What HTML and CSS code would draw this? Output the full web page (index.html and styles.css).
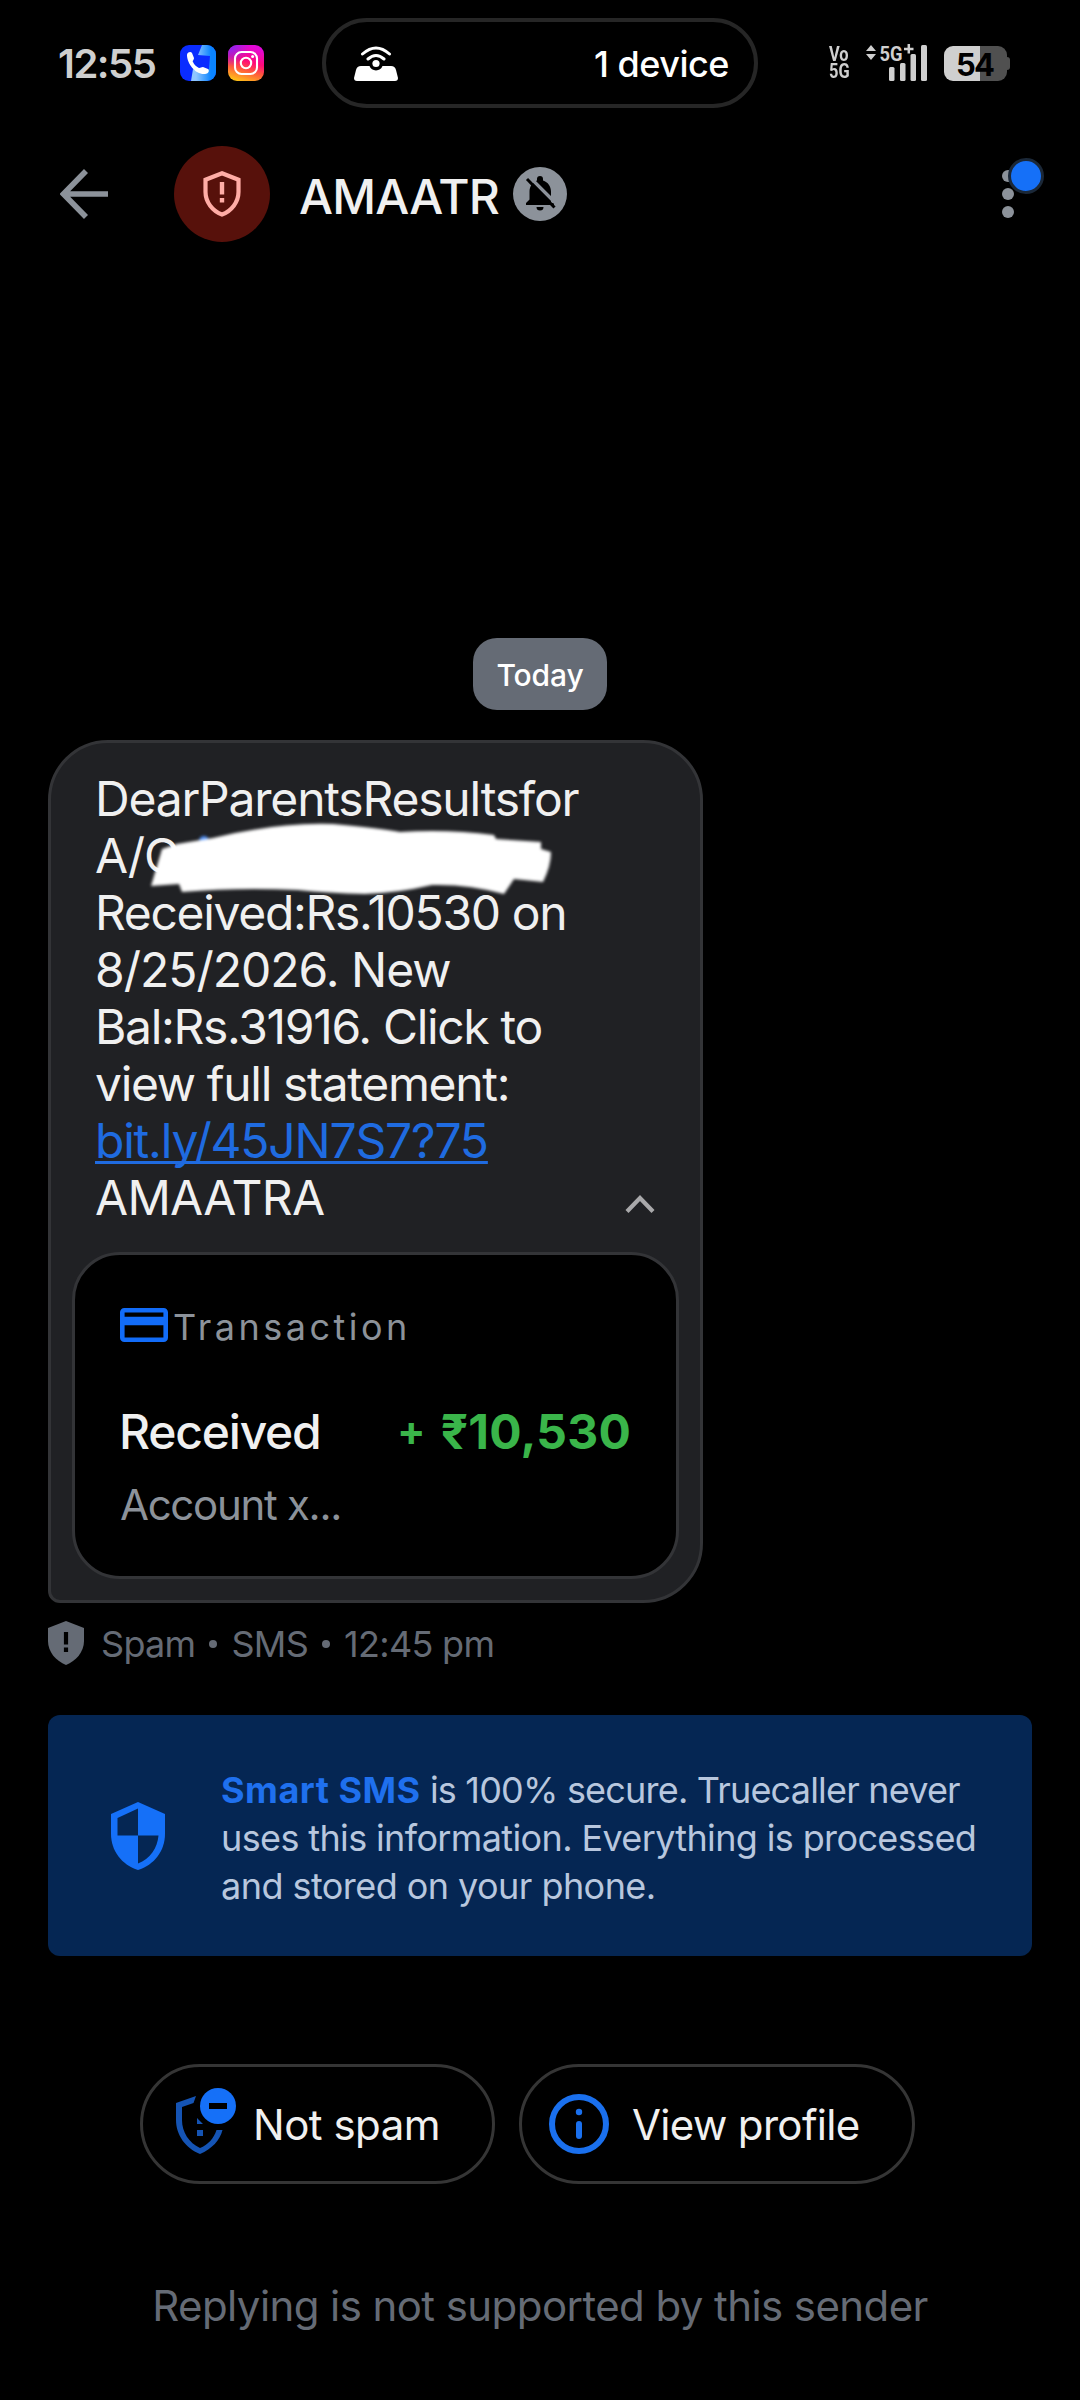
FILE: index.html
```html
<!DOCTYPE html>
<html lang="en">
<head>
<meta charset="utf-8">
<title>AMAATR</title>
<link rel="stylesheet" href="styles.css">
</head>
<body>
<div class="screen">
  <div class="status">
    <div class="status-left">
      <span class="clock">12:55</span>
      <svg class="app" viewBox="0 0 36 36">
        <defs>
          <linearGradient id="sky" x1="0" y1="0" x2="1" y2="0"><stop offset="0.2" stop-color="#8fc6ff"/><stop offset="0.8" stop-color="#0a84ff"/></linearGradient>
          <clipPath id="tile"><rect width="36" height="36" rx="9"/></clipPath>
        </defs>
        <g clip-path="url(#tile)">
          <rect width="36" height="36" fill="#0a2cff"/>
          <path d="M22 0h14v36H11l2-12 9 3 7-3 1-13-12-1z" fill="url(#sky)"/>
          <path d="M7 10c0-3 4-4 5-2l2 5c0 2-2 3-1 4 1 3 4 5 6 6 2 0 2-1 4-1l5 2c2 2 0 5-3 5C16 30 7 19 7 10z" fill="#fff"/>
        </g>
      </svg>
      <svg class="app" viewBox="0 0 36 36">
        <defs>
          <linearGradient id="insta" x1="0.2" y1="1" x2="0.5" y2="0"><stop offset="0" stop-color="#ffc815"/><stop offset="0.35" stop-color="#ff5a3c"/><stop offset="0.6" stop-color="#ff0a78"/><stop offset="1" stop-color="#e208d8"/></linearGradient>
          <radialGradient id="violet" cx="0" cy="0" r="0.6"><stop offset="0" stop-color="#7a2bff"/><stop offset="1" stop-color="#7a2bff" stop-opacity="0"/></radialGradient>
        </defs>
        <rect width="36" height="36" rx="9" fill="url(#insta)"/>
        <rect width="36" height="36" rx="9" fill="url(#violet)"/>
        <g fill="none" stroke="#fff" stroke-width="2.1"><rect x="7" y="7" width="22" height="22" rx="6.5"/><circle cx="18" cy="18" r="5.2"/></g>
        <circle cx="24.6" cy="11.6" r="1.5" fill="#fff"/>
      </svg>
    </div>
    <div class="island">
      <svg class="tether" viewBox="0 0 46 35">
        <path d="M8 20h8.500a7 7 0 0 0 13 0H38q4 0 5 4l2 8q0 3-3 3H4q-3 0-3-3l2-8q1-4 5-4z" fill="#fff"/>
        <circle cx="23" cy="17.500" r="3.600" fill="#fff"/>
        <path d="M9.500 8Q23-4 36.500 8M15 13Q23 6 31 13" fill="none" stroke="#fff" stroke-width="3" stroke-linecap="round"/>
      </svg>
      <span class="devices">1 device</span>
    </div>
    <div class="status-right">
      <div class="volte"><span>Vo</span><span>5G</span></div>
      <svg class="signal" viewBox="0 0 62 38">
        <path d="M5 1l5 6H0zM5 16l5-6H0z" fill="#cfcfcf"/>
        <text class="net" x="13.500" y="16.500" textLength="23" lengthAdjust="spacingAndGlyphs">5G</text>
        <path d="M38 5h9.500M42.800 0v9.500" stroke="#cfcfcf" stroke-width="2.500"/>
        <g fill="#cfcfcf"><rect x="23" y="23" width="5.500" height="14" rx="1.500"/><rect x="34" y="19" width="5.500" height="18" rx="1.500"/><rect x="44.500" y="10" width="5.500" height="27" rx="1.500"/><rect x="55" y="1" width="6" height="36" rx="1.500"/></g>
      </svg>
      <div class="battery"><span>54</span></div>
    </div>
  </div>

  <div class="header">
    <svg class="back" viewBox="0 0 48 50"><path d="M26 2L3.500 25 26 48M3 25h45" fill="none" stroke="#8c929a" stroke-width="5.600"/></svg>
    <div class="avatar">
      <svg width="38" height="46" viewBox="0 0 38 46">
        <path d="M19 2.300L35.500 8.700V21c0 10-7 19-16.500 22.500C9.500 40 2.500 31 2.500 21V8.700z" fill="none" stroke="#ffada6" stroke-width="4.200"/>
        <path d="M19 11v12.500M19 27v4.500" stroke="#ffada6" stroke-width="4.400"/>
      </svg>
    </div>
    <span class="title">AMAATR</span>
    <svg class="muted" viewBox="0 0 54 54">
      <circle cx="27" cy="27" r="27" fill="#8c929a"/>
      <path d="M27 9a3 3 0 0 1 3 3v1.500c5 1.500 8 6 8 11V36H41v2H13v-2l3.500-3.500V24.500c0-5 3-9.500 7.500-11V12a3 3 0 0 1 3-3z" fill="#000"/>
      <path d="M23.500 40h7a3.500 3.500 0 0 1-7 0z" fill="#000"/>
      <path d="M17 10.500L46 39.500" stroke="#8c929a" stroke-width="3.400"/>
      <path d="M14 12L41.500 40.500" stroke="#000" stroke-width="3"/>
    </svg>
    <div class="more">
      <i></i><i></i><i></i>
      <b class="badge"></b>
    </div>
  </div>

  <div class="day">Today</div>

  <div class="bubble">
    <div class="message">
      <span class="line">DearParentsResultsfor</span>
      <span class="line">A/C</span>
      <span class="line tight">Received:Rs.10530 on</span>
      <span class="line wide">8/25/2026. New</span>
      <span class="line tight">Bal:Rs.31916. Click to</span>
      <span class="line tight">view full statement:</span>
      <span class="line"><a class="link">bit.ly/45JN7S7?75</a></span>
      <span class="line caps">AMAATRA</span>
      <svg class="chevron" viewBox="0 0 30 20"><path d="M2 17.500L15 4l13 13.500" fill="none" stroke="#a9a9ab" stroke-width="4.200"/></svg>
    </div>
    <svg class="redaction" viewBox="0 0 410 80">
      <circle cx="56" cy="21" r="5" fill="#4c8df5"/>
      <path d="M3 66L14 29 29 24 65 18Q130 2 185 4Q230 8 252 12Q300 9 346 15L348 19 393 22V29L403 32Q403 46 395 62L366 59 356 74Q320 64 284 65Q250 73 217 74Q180 73 150 70Q90 67 34 72L31 64z" fill="#fff"/>
    </svg>
    <div class="card">
      <div class="card-kind">
        <svg width="48" height="34" viewBox="0 0 48 34"><rect x="2.300" y="2.300" width="43.400" height="29.400" rx="2" fill="none" stroke="#126cf8" stroke-width="4.600"/><path d="M2 13h44" stroke="#126cf8" stroke-width="8.500"/></svg>
        <span>Transaction</span>
      </div>
      <div class="card-main">
        <span class="received">Received</span>
        <span class="amount"><span class="plus">+</span><span class="sum">₹10,530</span></span>
      </div>
      <div class="account">Account x...</div>
    </div>
  </div>

  <div class="meta">
    <svg width="36" height="44" viewBox="0 0 36 44"><path d="M18 0L36 7v13c0 11-8 20-18 24C8 40 0 31 0 20V7z" fill="#656b75"/><path d="M18 11v12.500M18 26.500v4.500" stroke="#000" stroke-width="4.200"/></svg>
    <span>Spam</span><i></i><span>SMS</span><i></i><span>12:45 pm</span>
  </div>

  <div class="banner">
    <svg width="54" height="68" viewBox="0 0 54 68">
      <path d="M27 0L54 12v20c0 17-11 31-27 36C11 63 0 49 0 32V12z" fill="#1570f8"/>
      <path d="M27 6.500V33.500H6.500V16zM27 33.500H47.500C46.500 46 39 57 27 61.500z" fill="#052653"/>
    </svg>
    <div class="banner-text">
      <div class="l1"><b>Smart SMS</b> is 100% secure. Truecaller never</div>
      <div class="l2">uses this information. Everything is processed</div>
      <div class="l3">and stored on your phone.</div>
    </div>
  </div>

  <div class="actions">
    <div class="chip">
      <svg width="60" height="66" viewBox="0 0 60 66">
        <path d="M20 8L0 15v17c0 15 9.500 28 24 34 12-5 20-14 22.500-24L40.500 42C38 50 32 57 24 60 13 55 6 44 6 32V19L17.500 15z" fill="#1554b4"/>
        <path d="M21 42h6v6h-6zM21 30l6 6h-6z" fill="#1554b4"/>
        <circle cx="42" cy="18" r="18" fill="#1570f8"/>
        <rect x="33" y="15" width="18" height="6" fill="#000"/>
      </svg>
      <span>Not spam</span>
    </div>
    <div class="chip info">
      <svg width="60" height="60" viewBox="0 0 60 60">
        <circle cx="30" cy="30" r="27" fill="none" stroke="#1a70ee" stroke-width="6"/>
        <circle cx="30" cy="18" r="3.200" fill="#1a70ee"/>
        <path d="M30 30v12" stroke="#1a70ee" stroke-width="6" stroke-linecap="round"/>
      </svg>
      <span>View profile</span>
    </div>
  </div>

  <div class="footer">Replying is not supported by this sender</div>
</div>
</body>
</html>
```
FILE: styles.css
```css
* { box-sizing: border-box; }
body { margin: 0; background: #000; font-family: Inter, "Liberation Sans", sans-serif; color: #f0f0f0; }
svg { display: block; flex: none; }
.screen { display: flex; flex-direction: column; width: 1080px; height: 2400px; overflow: hidden; }

.status { display: grid; grid-template-columns: 322px 436px 1fr; align-items: center; height: 126px; }
.status-left { display: flex; align-items: center; padding-left: 58px; gap: 12px; }
.clock { width: 110px; font-size: 40px; font-weight: 600; letter-spacing: -1.5px; color: #cfcfcf; }
.app { width: 36px; height: 36px; }
.island { display: flex; align-items: center; justify-content: space-between; height: 90px; border: 4px solid #262626; border-radius: 45px; padding: 0 25px 0 27px; }
.tether { width: 46px; height: 35px; }
.devices { font-size: 36px; font-weight: 500; letter-spacing: -0.5px; color: #fff; padding-top: 2px; }
.status-right { display: flex; align-items: center; padding-left: 71px; }
.volte { display: flex; flex-direction: column; width: 37px; font: 700 20px/17px "Roboto", sans-serif; color: #cfcfcf; }
.volte span { transform: scaleX(0.82); transform-origin: left; }
.signal { width: 62px; height: 38px; overflow: visible; }
.net { font: 700 20px Roboto, sans-serif; fill: #cfcfcf; }
.battery { position: relative; display: flex; align-items: center; justify-content: center; width: 63px; height: 35px; margin-left: 16px; padding: 2px 2px 0 0; border-radius: 9px; background: linear-gradient(90deg, #cfcfcf 36px, #505050 36px); color: #000; font-size: 31px; font-weight: 700; letter-spacing: -2px; }
.battery::after { content: ""; position: absolute; right: -3px; top: 11px; width: 3px; height: 13px; border-radius: 0 3px 3px 0; background: #505050; }

.header { display: flex; align-items: center; height: 136px; padding: 0 60px; }
.back { width: 48px; height: 50px; }
.avatar { display: flex; align-items: center; justify-content: center; width: 96px; height: 96px; margin-left: 66px; border-radius: 50%; background: #57110b; }
.title { width: 213px; margin-left: 29px; padding-top: 4px; font-size: 48px; font-weight: 500; letter-spacing: -0.8px; white-space: nowrap; }
.muted { width: 54px; height: 54px; margin-left: 1px; }
.more { position: relative; display: flex; flex-direction: column; gap: 6px; margin-left: auto; margin-right: 6px; }
.more i { width: 12px; height: 12px; border-radius: 50%; background: #8c929a; }
.badge { position: absolute; left: 6px; top: -12px; width: 36px; height: 36px; border: 3px solid #1b2838; border-radius: 50%; background: #1570f8; }

.day { align-self: center; margin-top: 376px; width: 134px; height: 72px; padding-top: 1px; border-radius: 24px; background: #656b75; color: #fff; font-size: 30px; font-weight: 500; letter-spacing: -0.1px; line-height: 72px; text-align: center; }

.bubble { position: relative; width: 655px; height: 863px; margin: 30px 0 0 48px; padding: 27px 21px 0; border: 3px solid #333437; border-radius: 60px 60px 60px 12px; background: #202124; }
.message { position: relative; padding-left: 23px; font-size: 48px; line-height: 57px; letter-spacing: -1.2px; }
.line { display: block; white-space: nowrap; }
.tight { letter-spacing: -1.33px; }
.wide { letter-spacing: -1px; }
.caps { letter-spacing: -0.7px; }
.link { color: #1f6be0; text-decoration: underline; text-decoration-thickness: 3px; text-underline-offset: 3px; text-decoration-skip-ink: none; }
.chevron { position: absolute; right: 24px; bottom: 12px; width: 30px; height: 20px; }
.redaction { position: absolute; left: 97px; top: 77px; width: 410px; height: 80px; overflow: visible; filter: blur(1.5px); }
.card { height: 327px; margin-top: 26px; padding: 45px 45px 0 45px; border: 3px solid #333437; border-radius: 48px; background: #000; }
.card-kind { display: flex; align-items: center; gap: 5px; height: 50px; color: #8c929a; font-size: 36px; letter-spacing: 3.5px; }
.card-kind span { padding-top: 3px; }
.card-main { display: flex; justify-content: space-between; height: 60px; margin-top: 52px; font-size: 48px; line-height: 60px; }
.received { font-weight: 500; letter-spacing: -1.2px; margin-left: -1px; }
.amount { display: flex; gap: 15px; font-weight: 700; letter-spacing: 0.2px; color: #3ab54a; }
.plus { font-size: 42px; line-height: 58px; }
.account { height: 50px; margin-top: 18px; color: #8c929a; font-size: 42px; line-height: 50px; letter-spacing: -1.3px; }

.meta { display: flex; align-items: center; height: 48px; margin: 16px 0 0 48px; color: #656b75; font-size: 36px; letter-spacing: -0.7px; }
.meta svg { margin-right: 17px; }
.meta span { padding-top: 2px; }
.meta i { width: 8px; height: 8px; margin: 2px 14px 0; border-radius: 50%; background: #656b75; }

.banner { display: flex; align-items: center; height: 241px; margin: 48px 48px 0; padding-left: 63px; border-radius: 12px; background: #052653; }
.banner-text { margin-left: 56px; padding-top: 5px; font-size: 36px; line-height: 48px; color: #b8c7de; white-space: nowrap; }
.banner-text b { color: #1f70ee; letter-spacing: 0.5px; }
.l1 { letter-spacing: -0.8px; }
.l2 { letter-spacing: -0.63px; }
.l3 { letter-spacing: -0.55px; }

.actions { display: flex; gap: 24px; margin: 108px 0 0 140px; }
.chip { display: flex; align-items: center; width: 355px; height: 120px; padding-left: 33px; border: 3px solid #353535; border-radius: 60px; font-size: 42px; letter-spacing: -0.5px; white-space: nowrap; }
.chip svg { margin-right: 17px; }
.chip span { padding-top: 1px; }
.chip:first-child svg { margin-top: -6px; }
.info { width: 396px; padding-left: 27px; letter-spacing: -0.65px; }
.info svg { margin-right: 23px; }

.footer { margin-top: 92px; color: #656b75; font-size: 42px; line-height: 60px; letter-spacing: -0.58px; text-align: center; }
```
